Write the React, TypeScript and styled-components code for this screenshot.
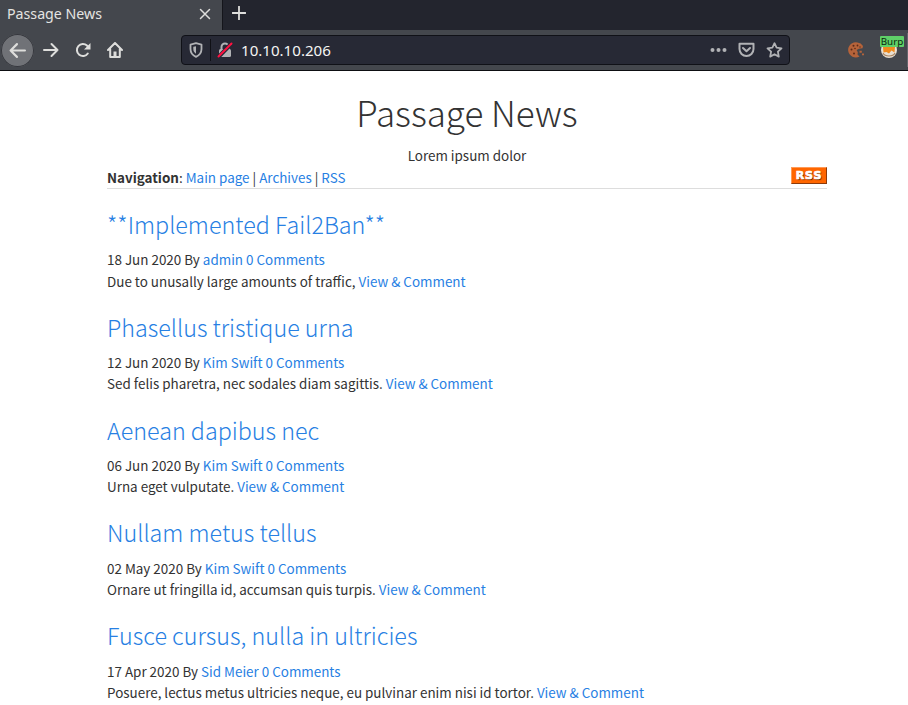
import React from "react";
import styled, { createGlobalStyle } from "styled-components";

const GlobalStyle = createGlobalStyle`
  * { box-sizing: border-box; }
  html, body { margin: 0; padding: 0; background: #fff; overflow: hidden; }
`;

const Window = styled.div`
  width: 908px;
  height: 705px;
  overflow: hidden;
  background: #fff;
  font-family: "Noto Sans", sans-serif;
`;

const TabStrip = styled.div`
  display: flex;
  height: 30px;
  background: #23252e;
`;

const Tab = styled.div`
  display: flex;
  align-items: center;
  justify-content: space-between;
  width: 222px;
  height: 30px;
  padding: 0 11px 2px 7px;
  background: #44474d;
  color: #e4e4e2;
  font-size: 14.2px;
`;

const TabLabel = styled.span`
  padding-bottom: 2px;
`;

const NewTab = styled.div`
  display: flex;
  align-items: center;
  justify-content: center;
  width: 33px;
  height: 30px;
  padding-bottom: 4px;
  border-left: 1px solid #14151b;
`;

const Toolbar = styled.div`
  display: flex;
  align-items: center;
  height: 41px;
  background: #44474d;
  border-bottom: 1px solid #0d0e12;
`;

const BackButton = styled.div`
  display: flex;
  align-items: center;
  justify-content: center;
  width: 33px;
  height: 33px;
  margin-left: 1px;
  border-radius: 50%;
  background: #707277;
  box-shadow: inset 0 0 0 1px #35373d;
`;

const ToolButton = styled.div<{ $gap: number }>`
  display: flex;
  margin-left: ${(p) => p.$gap}px;
`;

const AddressBar = styled.div`
  display: flex;
  align-items: center;
  width: 609px;
  height: 30px;
  margin-left: 58px;
  padding-left: 7px;
  border: 1px solid #101117;
  border-radius: 4px;
  background: #272935;
`;

const Separator = styled.div`
  width: 1px;
  height: 22px;
  margin: 0 6px 0 7px;
  background: #0f1015;
`;

const Address = styled.div`
  flex: 1;
  margin-left: 8px;
  color: #f5f5f3;
  font-size: 15.1px;
  line-height: 28px;
`;

const BarIcons = styled.div`
  display: flex;
  align-items: center;
  gap: 11px;
  padding-right: 6px;
`;

const Extensions = styled.div`
  display: flex;
  align-items: center;
  flex: 1;
  height: 40px;
  padding-left: 58px;
`;

const BurpExtension = styled.div`
  position: relative;
  width: 24px;
  height: 24px;
  margin-left: 15px;
`;

const BurpBadge = styled.span`
  position: absolute;
  left: 0;
  top: -2px;
  width: 24px;
  height: 11px;
  border-radius: 1px;
  background: #5fd068;
  color: #0b260d;
  font: 9.8px/11px "Noto Sans", sans-serif;
  text-align: center;
`;

const EdgeLine = styled.div`
  width: 1px;
  height: 34px;
  margin-left: auto;
  background: #64666c;
`;

const Page = styled.main`
  width: 720px;
  margin-left: 107px;
  padding-top: 19px;
  color: #333;
  font-family: "Noto Sans CJK JP", "Noto Sans", sans-serif;
  font-size: 13.43px;
  line-height: 21.43px;
  white-space: nowrap;
`;

const Heading = styled.h1`
  margin: 0 0 11.5px;
  font-size: 35px;
  font-weight: 200;
  line-height: 43px;
  text-align: center;
`;

const Tagline = styled.div`
  height: 22.4px;
  text-align: center;
`;

const NavRow = styled.nav`
  display: flex;
  justify-content: space-between;
  height: 22px;
  border-bottom: 1px solid #ddd;
`;

const RssBadge = styled.span`
  width: 36px;
  height: 17px;
  border: 1px solid;
  border-color: #ff9a57 #8c3a0a #8c3a0a #ff9a57;
  background: #ff6600;
  color: #fff;
  font: bold 11px/15px "DejaVu Sans", sans-serif;
  letter-spacing: 0.9px;
  text-align: center;
  text-shadow: 1px 1px 1px #5a2000;
  -webkit-text-stroke: 0.7px #fff;
`;

const Link = styled.a`
  color: #2780e3;
`;

const Article = styled.article`
  height: 102.86px;
  padding-top: 20.98px;
`;

const Title = styled.h3`
  margin: 0 0 10.92px;
  color: #2780e3;
  font-size: 23.3px;
  font-weight: 200;
  line-height: 28.6px;
`;

const Line = styled.div`
  height: 21.17px;
`;

type Post = { title: string; date: string; author: string; text: string };

const posts: Post[] = [
  { title: "**Implemented Fail2Ban**", date: "18 Jun 2020", author: "admin", text: "Due to unusally large amounts of traffic," },
  { title: "Phasellus tristique urna", date: "12 Jun 2020", author: "Kim Swift", text: "Sed felis pharetra, nec sodales diam sagittis." },
  { title: "Aenean dapibus nec", date: "06 Jun 2020", author: "Kim Swift", text: "Urna eget vulputate." },
  { title: "Nullam metus tellus", date: "02 May 2020", author: "Kim Swift", text: "Ornare ut fringilla id, accumsan quis turpis." },
  { title: "Fusce cursus, nulla in ultricies", date: "17 Apr 2020", author: "Sid Meier", text: "Posuere, lectus metus ultricies neque, eu pulvinar enim nisi id tortor." },
];

const stroke = { fill: "none", stroke: "#dededc", strokeWidth: 2, strokeLinecap: "round", strokeLinejoin: "round" } as const;

const CookieIcon = () => (
  <svg width="17" height="16" viewBox="0 0 17 16">
    <path d="M9.500.5A7.600 7.600 0 1 0 11.500 14.500L9.500 12.500 9.800 10.300 8.600 8 11 6.800 14.500 6.300 15 4A7.600 7.600 0 0 0 9.500.5Z" fill="#b5633a" />
    <g fill="#5b2a18">
      <circle cx="5.500" cy="3.700" r="1" /><circle cx="9.500" cy="3.500" r=".9" /><circle cx="3.500" cy="7.500" r="1" />
      <circle cx="7" cy="6.500" r=".8" /><circle cx="6" cy="11.500" r="1" /><circle cx="12" cy="5" r=".7" />
    </g>
    <path d="M11.500 8.700h2.300v2h-2.300zM14 11.500h2v1.800h-2z" fill="#b5633a" />
  </svg>
);

const BurpIcon = () => (
  <svg width="24" height="24" viewBox="0 0 24 24">
    <circle cx="9" cy="12" r="8" fill="#e9dfd2" />
    <path d="M3 9h12l-.5 5.500-3-2-2.500 3-2.500-1.500-3 .5z" fill="#ef8a1d" />
    <path d="M3 15c2 4 10 4 12 0" fill="none" stroke="#a9835f" strokeWidth="1.200" />
  </svg>
);

export default function App() {
  return (
    <Window>
      <GlobalStyle />
      <TabStrip>
        <Tab>
          <TabLabel>Passage News</TabLabel>
          <svg width="12" height="12" viewBox="0 0 12 12"><path d="M1.500 1.500l9 9M10.500 1.500l-9 9" {...stroke} strokeWidth={1.500} /></svg>
        </Tab>
        <NewTab>
          <svg width="14" height="14" viewBox="0 0 14 14"><path d="M7 .5v13M.5 7h13" {...stroke} strokeWidth={1.800} /></svg>
        </NewTab>
      </TabStrip>
      <Toolbar>
        <BackButton>
          <svg width="17" height="17" viewBox="0 0 16 16"><path d="M15 8H1.500M7.500 2l-6 6 6 6" {...stroke} /></svg>
        </BackButton>
        <ToolButton $gap={9}>
          <svg width="16" height="16" viewBox="0 0 16 16"><path d="M1 8h13.500M8.500 2l6 6-6 6" {...stroke} /></svg>
        </ToolButton>
        <ToolButton $gap={16}>
          <svg width="16" height="16" viewBox="0 0 16 16">
            <path d="M12.800 11.500A6 6 0 1 1 12 3.600l1.500 1.600" {...stroke} />
            <path d="M15.500 1v6.500H9z" fill="#dededc" />
          </svg>
        </ToolButton>
        <ToolButton $gap={16}>
          <svg width="16" height="16" viewBox="0 0 16 16">
            <path d="M1 8l7-7 7 7M3.200 7v8h9.600V7" {...stroke} />
            <path d="M6.500 15V9.500h3V15z" fill="#dededc" />
          </svg>
        </ToolButton>
        <AddressBar>
          <svg width="14" height="16" viewBox="0 0 14 16">
            <path d="M7 1.200L12.500 2.600V7c0 4-2.500 6.500-5.500 7.800C4 13.500 1.500 11 1.500 7V2.600z" {...stroke} stroke="#b1b2b5" strokeWidth={1.800} />
            <path d="M7 4.200v7.600C5.300 10.700 4.300 9 4.300 7V4.800z" fill="#b1b2b5" />
          </svg>
          <Separator />
          <svg width="16" height="16" viewBox="0 0 16 16">
            <path d="M4.500 8V5a3.500 3.500 0 0 1 7 0v3" {...stroke} stroke="#b1b2b5" />
            <rect x="2" y="7" width="12" height="8" rx="1.500" fill="#b1b2b5" />
            <path d="M1 15.500L14.500 1.500" stroke="#272935" strokeWidth="4" />
            <path d="M1.500 14.500L14.500 1.500" stroke="#ff1140" strokeWidth="2" strokeLinecap="round" />
          </svg>
          <Address>10.10.10.206</Address>
          <BarIcons>
            <svg width="17" height="16" viewBox="0 0 17 16" fill="#b1b2b5"><circle cx="2.500" cy="8" r="2" /><circle cx="8.500" cy="8" r="2" /><circle cx="14.500" cy="8" r="2" /></svg>
            <svg width="17" height="16" viewBox="0 0 17 16"><path d="M1.500 1.800h14V7a7 7 0 0 1-14 0zM5 6l3.500 3.300L12 6" {...stroke} stroke="#b1b2b5" /></svg>
            <svg width="17" height="16" viewBox="0 0 17 16"><path d="M8.500 1.200l2.100 4.500 4.900.6-3.600 3.400.9 4.900-4.300-2.400-4.300 2.400.9-4.900L1.500 6.300l4.900-.6z" {...stroke} stroke="#b1b2b5" strokeWidth={1.800} /></svg>
          </BarIcons>
        </AddressBar>
        <Extensions>
          <CookieIcon />
          <BurpExtension>
            <BurpIcon />
            <BurpBadge>Burp</BurpBadge>
          </BurpExtension>
          <EdgeLine />
        </Extensions>
      </Toolbar>
      <Page>
        <Heading>Passage News</Heading>
        <Tagline>Lorem ipsum dolor</Tagline>
        <NavRow>
          <div>
            <b>Navigation</b>: <Link>Main page</Link> | <Link>Archives</Link> | <Link>RSS</Link>
          </div>
          <RssBadge>RSS</RssBadge>
        </NavRow>
        {posts.map((p) => (
          <Article key={p.title}>
            <Title>{p.title}</Title>
            <Line>{p.date} By <Link>{p.author}</Link> <Link>0 Comments</Link></Line>
            <Line>{p.text} <Link>View &amp; Comment</Link></Line>
          </Article>
        ))}
      </Page>
    </Window>
  );
}
